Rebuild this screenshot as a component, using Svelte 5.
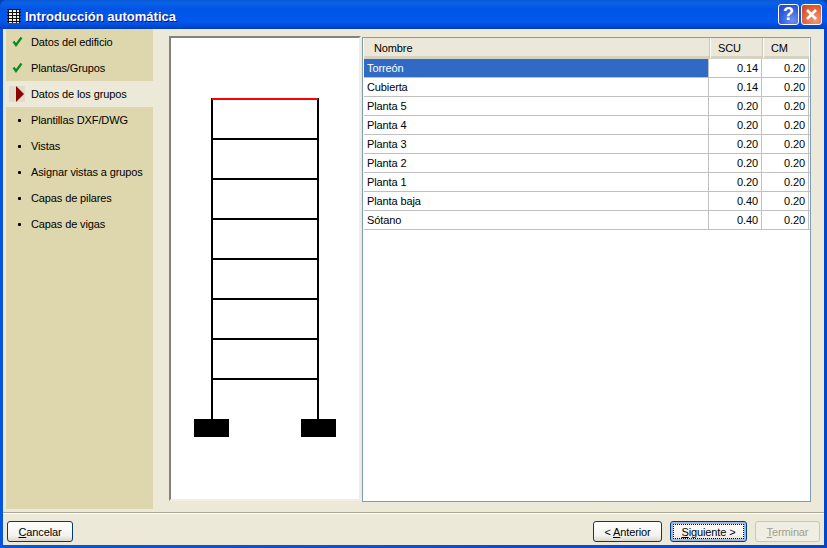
<script>
  const done = ['Datos del edificio', 'Plantas/Grupos'];
  const todo = ['Plantillas DXF/DWG', 'Vistas', 'Asignar vistas a grupos', 'Capas de pilares', 'Capas de vigas'];
  const rows = [
    ['Torreón', '0.14', '0.20'],
    ['Cubierta', '0.14', '0.20'],
    ['Planta 5', '0.20', '0.20'],
    ['Planta 4', '0.20', '0.20'],
    ['Planta 3', '0.20', '0.20'],
    ['Planta 2', '0.20', '0.20'],
    ['Planta 1', '0.20', '0.20'],
    ['Planta baja', '0.40', '0.20'],
    ['Sótano', '0.40', '0.20']
  ];
  const floors = [139, 179, 219, 259, 299, 339, 379];
</script>

<div class="window">
  <header class="titlebar">
    <svg class="appicon" width="16" height="16" viewBox="0 0 16 16">
      <rect x="2" y="1" width="12" height="14" fill="#f4f0d8" />
      <path d="M1 1.5H15M1 4.5H15M1 7.5H15M1 10.5H15M1 13.5H15M2.5 1V15M6.5 1V15M10.5 1V15M13.5 1V15" stroke="#111" fill="none" />
    </svg>
    <span class="title">Introducción automática</span>
    <button class="cap help" aria-label="Ayuda">?</button>
    <button class="cap close" aria-label="Cerrar">
      <svg width="13" height="13" viewBox="0 0 13 13"><path d="M2 2L11 11M11 2L2 11" stroke="#fff" stroke-width="2.6" /></svg>
    </button>
  </header>

  <div class="client">
    <div class="main">
      <nav class="steps">
        {#each done as s}
          <div class="step">
            <svg class="mark" width="11" height="11" viewBox="0 0 11 11"><path d="M1.5 5.5L4 9L9.5 1.5" stroke="#0a8a1e" stroke-width="2.2" fill="none" /></svg>
            <span>{s}</span>
          </div>
        {/each}
        <div class="step current">
          <span class="arrow"><i></i></span>
          <span>Datos de los grupos</span>
        </div>
        {#each todo as s}
          <div class="step">
            <span class="dotbox"><i></i></span>
            <span>{s}</span>
          </div>
        {/each}
      </nav>

      <div class="preview">
        <svg width="188" height="461" viewBox="171 38 188 461">
          <path d="M212 98V420M318 98V420" stroke="#000" stroke-width="2" />
          {#each floors as y}
            <path d="M212 {y}H318" stroke="#000" stroke-width="2" />
          {/each}
          <path d="M212 99H318" stroke="#f00" stroke-width="2" />
          <rect x="194" y="419" width="35" height="18" fill="#000" />
          <rect x="301" y="419" width="35" height="18" fill="#000" />
        </svg>
      </div>

      <div class="tablebox">
        <div class="row head">
          <div class="c name">Nombre</div>
          <div class="c scu">SCU</div>
          <div class="c cm">CM</div>
        </div>
        {#each rows as r, i}
          <div class="row" class:sel={i === 0}>
            <div class="c name">{r[0]}</div>
            <div class="c scu">{r[1]}</div>
            <div class="c cm">{r[2]}</div>
          </div>
        {/each}
      </div>
    </div>

    <footer class="footer">
      <button class="btn cancel"><u>C</u>ancelar</button>
      <div class="spacer"></div>
      <button class="btn prev">&lt; <u>A</u>nterior</button>
      <button class="btn next"><u>S</u>iguiente &gt;</button>
      <button class="btn finish" disabled><u>T</u>erminar</button>
    </footer>
  </div>
</div>

<style>
  :global(body) {
    margin: 0;
    background: #0a3fb8;
  }
  .window {
    width: 827px;
    height: 548px;
    box-sizing: border-box;
    display: flex;
    flex-direction: column;
    font-family: "Liberation Sans", Arial, sans-serif;
    font-size: 11px;
    letter-spacing: -0.12px;
    color: #000;
    overflow: hidden;
    border-radius: 7px 7px 0 0;
    background: linear-gradient(90deg, #0855dd, #0a4fd8 50%, #0644c8);
  }
  .titlebar {
    height: 29px;
    flex: none;
    display: flex;
    align-items: center;
    padding: 2px 5px 0 6px;
    box-sizing: border-box;
    background: linear-gradient(#0a5ad6 0, #0a61e6 3px, #0055e5 9px, #0058ee 22px, #0246cf 27px, #003fb8 29px);
  }
  .appicon {
    flex: none;
  }
  .title {
    margin: 2px 0 0 3px;
    flex: 1;
    color: #fff;
    font-weight: 700;
    font-size: 13px;
    letter-spacing: 0;
    text-shadow: 1px 1px 0 #0f1089;
  }
  .cap {
    width: 21px;
    height: 21px;
    padding: 0;
    margin-left: 2px;
    margin-top: -2px;
    border: 1px solid #fff;
    border-radius: 3px;
    display: flex;
    align-items: center;
    justify-content: center;
    color: #fff;
    font-family: "Liberation Sans", sans-serif;
    font-weight: 700;
    font-size: 18px;
  }
  .help {
    background: radial-gradient(circle at 70% 80%, #6d92ef, #2d5be0 60%, #2148c8);
  }
  .close {
    background: radial-gradient(circle at 70% 80%, #ef9a78, #e2613a 60%, #c93e1c);
  }
  .client {
    flex: 1;
    margin: 0 3px 3px 3px;
    background: #ece9d8;
    display: flex;
    flex-direction: column;
    min-height: 0;
  }
  .main {
    height: 480px;
    flex: none;
    display: flex;
    align-items: flex-start;
  }
  .steps {
    width: 147px;
    height: 480px;
    margin-left: 3px;
    flex: none;
    background: #ded7ae;
    box-sizing: border-box;
  }
  .step {
    height: 26px;
    display: flex;
    align-items: center;
    position: relative;
    padding: 0 0 0 25px;
    box-sizing: border-box;
  }
  .step .mark {
    position: absolute;
    left: 6px;
    top: 7px;
  }
  .current {
    background: #ece9d8;
  }
  .arrow {
    position: absolute;
    left: 3px;
    top: 5px;
    width: 16px;
    height: 16px;
    background: #e2dccb;
  }
  .arrow i {
    position: absolute;
    left: 7px;
    top: 0;
    border-style: solid;
    border-width: 8px 0 8px 8px;
    border-color: transparent transparent transparent #8b0000;
  }
  .dotbox {
    position: absolute;
    left: 12px;
    top: 12px;
    width: 4px;
    height: 4px;
  }
  .dotbox i {
    display: block;
    width: 3px;
    height: 3px;
    background: #000;
    border-radius: 1px;
  }
  .preview {
    width: 188px;
    height: 461px;
    margin: 7px 1px 0 16px;
    flex: none;
    background: #fff;
    border: 2px solid;
    border-color: #85827a #f1efe2 #f1efe2 #85827a;
  }
  .preview svg {
    display: block;
  }
  .tablebox {
    width: 449px;
    height: 465px;
    margin-top: 8px;
    padding-left: 1px;
    box-sizing: border-box;
    flex: none;
    border: 1px solid #7f9db9;
    background: #fff;
  }
  .row {
    display: grid;
    grid-template-columns: 345px 53px 47px;
    height: 19px;
    box-sizing: border-box;
    border-bottom: 1px solid #c0c0c0;
    line-height: 18px;
  }
  .row .c {
    padding: 0 3px;
    border-right: 1px solid #c0c0c0;
    box-sizing: border-box;
    white-space: nowrap;
  }
  .row .scu, .row .cm {
    text-align: right;
  }
  .row.sel .name {
    background: #316ac5;
    color: #fff;
  }
  .head {
    height: 21px;
    width: 445px;
    background: #ebe8d9;
    border-bottom: 3px solid #d6d2c2;
    line-height: 20px;
  }
  .head .c {
    border-right: 0;
  }
  .head .name {
    padding-left: 10px;
  }
  .head .scu, .head .cm {
    text-align: left;
    padding-left: 9px;
    box-shadow: inset 1px 0 0 #cbc7b8, inset 2px 0 0 #fff;
  }
  .footer {
    flex: 1;
    box-sizing: border-box;
    border-top: 1px solid #aca899;
    box-shadow: inset 0 1px 0 #fff;
    margin-top: 3px;
    display: flex;
    align-items: flex-start;
    padding: 8px 4px 0 4px;
  }
  .spacer {
    flex: 1;
  }
  .btn {
    height: 21px;
    padding: 0;
    font: inherit;
    letter-spacing: inherit;
    color: #000;
    border: 1px solid #003c74;
    border-radius: 3px;
    background: linear-gradient(#fff, #f4f3ee 70%, #dcd8cc);
  }
  .cancel {
    width: 66px;
  }
  .prev {
    width: 69px;
    margin-right: 8px;
  }
  .next {
    width: 77px;
    margin-right: 8px;
    box-shadow: inset 0 0 0 2px #9db8e8;
    outline: 1px dotted #000;
    outline-offset: -4px;
  }
  .finish {
    width: 65px;
    color: #a19e8f;
    border-color: #c9c7ba;
    background: #f0eee2;
  }
</style>
